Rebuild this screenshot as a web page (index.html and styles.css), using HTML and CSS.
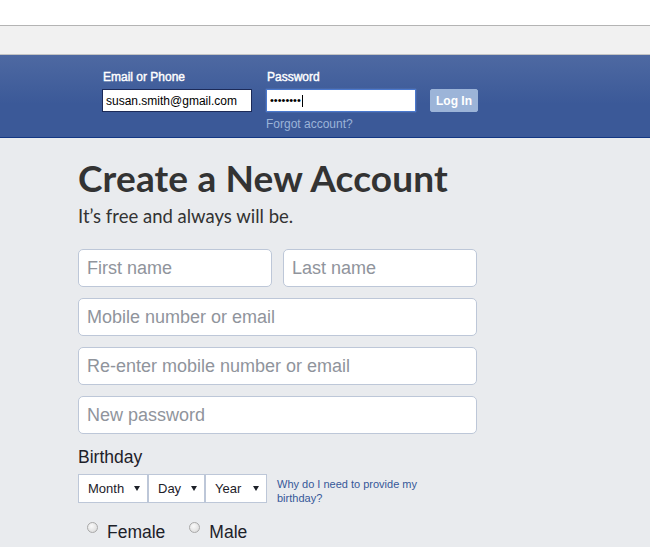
FILE: index.html
```html
<!DOCTYPE html>
<html>
<head>
  <meta charset="UTF-8">
  <title>Create a New Account</title>
  <link rel="stylesheet" href="styles.css">
</head>

<body>
  <!-- 顶部空白和浏览器工具条 -->
  <div class="topbar"></div>
  <div class="toolbar"></div>

  <!-- 登录栏 -->
  <div class="header">
    <form class="login">
      <div class="login-col">
        <label class="login-label" for="email">Email or Phone</label>
        <input class="login-input" id="email" type="text" value="susan.smith@gmail.com">
      </div>
      <div class="login-col">
        <label class="login-label">Password</label>
        <div class="login-input focused"><span class="dots">••••••••</span><span class="caret"></span></div>
        <a class="forgot" href="#">Forgot account?</a>
      </div>
      <button class="login-btn" type="button">Log In</button>
    </form>
  </div>

  <!-- 注册表单 -->
  <div class="content">
    <h1 class="title">Create a New Account</h1>
    <p class="sub">It’s free and always will be.</p>

    <div class="row">
      <input class="field" type="text" placeholder="First name">
      <input class="field" type="text" placeholder="Last name">
    </div>
    <input class="field" type="text" placeholder="Mobile number or email">
    <input class="field" type="text" placeholder="Re-enter mobile number or email">
    <input class="field" type="password" placeholder="New password">

    <div class="bday-label">Birthday</div>
    <div class="bday">
      <div class="select month">Month<span class="arrow"></span></div>
      <div class="select day">Day<span class="arrow"></span></div>
      <div class="select year">Year<span class="arrow"></span></div>
      <a class="why" href="#">Why do I need to provide my birthday?</a>
    </div>

    <div class="gender">
      <label class="choice"><span class="radio"></span>Female</label>
      <label class="choice"><span class="radio"></span>Male</label>
    </div>
  </div>
</body>
</html>
```

FILE: styles.css
```css
body {
  margin: 0;
  background: #e9ebee;
  font-family: "Liberation Sans", Arial, sans-serif;
  color: #1d2129;
}
.topbar {
  height: 25px;
  background: #fff;
  border-bottom: 1px solid #b4b4b4;
}
.toolbar {
  height: 28px;
  background: #f1f1f1;
  border-bottom: 1px solid #c4c4c4;
}
.header {
  height: 82px;
  background: linear-gradient(#4e69a2, #3b5998 60%);
  border-bottom: 1px solid #133783;
}
.login {
  display: flex;
  align-items: flex-start;
  padding: 15px 0 0 102px;
  margin: 0;
}
.login-col {
  display: flex;
  flex-direction: column;
  width: 150px;
  margin-right: 14px;
}
.login-label {
  padding-left: 1px;
  font-size: 12px;
  line-height: 14px;
  color: #fff;
  -webkit-text-stroke: 0.4px #fff;
  margin-bottom: 5px;
}
.login-input {
  box-sizing: border-box;
  width: 150px;
  height: 23px;
  margin: 0;
  padding: 0 3px;
  border: 1px solid #1c2a58;
  background: #fff;
  font-family: "Liberation Sans", Arial, sans-serif;
  font-size: 12px;
  color: #000;
  outline: none;
}
.login-input.focused {
  display: flex;
  align-items: center;
  border-color: #4a78cd;
  box-shadow: 0 0 1px #7395d8;
}
.dots {
  font-size: 11px;
  line-height: 12px;
  margin-top: -2px;
}
.caret {
  width: 1px;
  height: 12px;
  background: #000;
  margin-left: 1px;
}
.forgot {
  margin-top: 5px;
  font-size: 12px;
  line-height: 14px;
  color: #9cb4d8;
  text-decoration: none;
}
.login-btn {
  margin-top: 19px;
  width: 48px;
  height: 23px;
  padding: 0;
  border: 1px solid #9cb4d8;
  border-radius: 2px;
  background: #9cb4d8;
  color: #fff;
  font-family: "Liberation Sans", Arial, sans-serif;
  font-size: 12px;
  font-weight: bold;
}
.content {
  width: 399px;
  padding-left: 78px;
  display: flex;
  flex-direction: column;
}
.title {
  margin: 18px 0 0;
  font-family: Lato, "Liberation Sans", sans-serif;
  font-weight: bold;
  font-size: 37px;
  letter-spacing: 0.15px;
  line-height: 44px;
  white-space: nowrap;
  color: #333;
}
.sub {
  margin: 5px 0 22px;
  font-family: Lato, "Liberation Sans", sans-serif;
  font-size: 18.5px;
  line-height: 22px;
  color: #333;
}
.row {
  display: flex;
  gap: 11px;
}
.row .field {
  width: 194px;
}
.field {
  box-sizing: border-box;
  width: 399px;
  height: 38px;
  margin: 0 0 11px;
  padding: 0 8px;
  border: 1px solid #bdc7d8;
  border-radius: 5px;
  background: #fff;
  font-family: "Liberation Sans", Arial, sans-serif;
  font-size: 18px;
  color: #1d2129;
  outline: none;
}
.field::placeholder {
  color: #90949c;
}
.bday-label {
  margin-top: 2px;
  font-size: 17.5px;
  line-height: 20px;
}
.bday {
  display: flex;
  align-items: flex-start;
  margin-top: 7px;
}
.select {
  box-sizing: border-box;
  height: 29px;
  display: flex;
  align-items: center;
  justify-content: space-between;
  padding: 0 7px 0 9px;
  border: 1px solid #bdc7d8;
  background: #fff;
  font-size: 13px;
  color: #1d2129;
}
.month { width: 70px; }
.day { width: 57px; }
.year { width: 62px; }
.arrow {
  width: 0;
  height: 0;
  border-left: 3px solid transparent;
  border-right: 3px solid transparent;
  border-top: 5px solid #1d2129;
  margin-top: -1px;
}
.why {
  width: 150px;
  margin: 3px 0 0 10px;
  font-size: 11px;
  line-height: 14px;
  color: #365899;
  text-decoration: none;
}
.gender {
  display: flex;
  gap: 15px;
  margin-top: 17px;
}
.choice {
  display: flex;
  align-items: flex-start;
  font-size: 17.5px;
  line-height: 20px;
}
.radio {
  box-sizing: border-box;
  width: 11px;
  height: 11px;
  margin: 0 9px 0 9px;
  border: 1px solid #a9a9a9;
  border-radius: 50%;
  background: radial-gradient(circle at 40% 35%, #fafafa, #d6d6d6);
}
```
